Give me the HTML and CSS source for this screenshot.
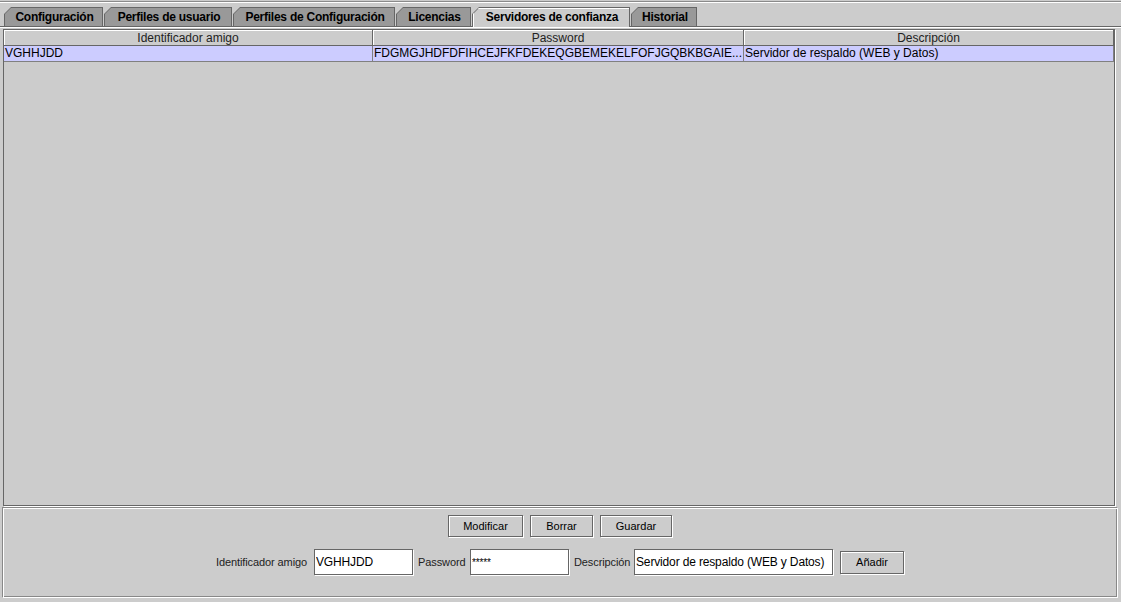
FILE: index.html
```html
<!DOCTYPE html>
<html lang="es">
<head>
    <meta charset="UTF-8">
    <title>Servidores de confianza</title>
    <link rel="stylesheet" href="styles.css">
</head>
<body>
    <div class="window">
        <div class="rule"></div>

        <div class="tabs">
            <div class="tab t-conf"><span class="tab-face">Configuración</span></div>
            <div class="tab t-users"><span class="tab-face">Perfiles de usuario</span></div>
            <div class="tab t-profiles"><span class="tab-face">Perfiles de Configuración</span></div>
            <div class="tab t-lic"><span class="tab-face">Licencias</span></div>
            <div class="tab t-trust active"><span class="tab-face">Servidores de confianza</span></div>
            <div class="tab t-hist"><span class="tab-face">Historial</span></div>
        </div>

        <div class="pane">
            <div class="table-box">
                <div class="thead">
                    <div class="th c1">Identificador amigo</div>
                    <div class="th c2">Password</div>
                    <div class="th c3">Descripción</div>
                </div>
                <div class="tr selected">
                    <div class="td c1">VGHHJDD</div>
                    <div class="td c2">FDGMGJHDFDFIHCEJFKFDEKEQGBEMEKELFOFJGQBKBGAIE...</div>
                    <div class="td c3">Servidor de respaldo (WEB y Datos)</div>
                </div>
            </div>

            <div class="editor">
                <div class="actions">
                    <button class="btn btn-mod">Modificar</button>
                    <button class="btn btn-del">Borrar</button>
                    <button class="btn btn-save">Guardar</button>
                </div>
                <div class="form">
                    <label class="lbl l-id">Identificador amigo</label>
                    <input class="field f-short" type="text" value="VGHHJDD">
                    <label class="lbl l-pass">Password</label>
                    <input class="field f-short f-pass" type="text" value="*****">
                    <label class="lbl l-desc">Descripción</label>
                    <input class="field f-long" type="text" value="Servidor de respaldo (WEB y Datos)">
                    <button class="btn btn-add">Añadir</button>
                </div>
            </div>
        </div>
    </div>
</body>
</html>
```

FILE: styles.css
```css
html, body {
    margin: 0;
    padding: 0;
    background: #cccccc;
}
body {
    font-family: "Liberation Sans", Arial, sans-serif;
    font-size: 12px;
    color: #000;
    width: 1121px;
    height: 602px;
    overflow: hidden;
}
.window {
    padding-top: 1px;
}
.rule {
    height: 0;
    border-top: 1px solid #8a8a8a;
    border-bottom: 1px solid #ffffff;
}

/* tab strip */
.tabs {
    display: flex;
    gap: 1px;
    margin-top: 4px;
    padding-left: 4px;
    height: 19px;
    position: relative;
    z-index: 1;
}
.tab {
    box-sizing: border-box;
    background: #666666;
    padding: 1px 1px 0 1px;
    clip-path: polygon(0 7px, 7px 0, 100% 0, 100% 100%, 0 100%);
}
.t-conf { width: 99px; }
.t-users { width: 128px; }
.t-profiles { width: 162px; }
.t-lic { width: 75px; }
.t-trust { width: 158px; }
.t-hist { width: 66px; }
.tab-face {
    display: flex;
    align-items: center;
    justify-content: center;
    height: 100%;
    padding-left: 2px;
    background: #999999;
    clip-path: polygon(0 6px, 6px 0, 100% 0, 100% 100%, 0 100%);
    font-weight: bold;
    font-size: 12px;
    letter-spacing: -0.25px;
    color: #000;
    white-space: nowrap;
    box-sizing: border-box;
}
.tab.active {
    height: 20px;
}
.tab.active .tab-face {
    background: #cccccc;
    box-shadow: inset 1px 1px 0 #ffffff;
    padding-bottom: 1px;
}

/* content below tabs */
.pane {
    border-top: 1px solid #666666;
    box-shadow: inset 0 1px 0 #ffffff;
    padding-top: 2px;
}
.table-box {
    margin-left: 3px;
    width: 1112px;
    height: 477px;
    box-sizing: border-box;
    border: 1px solid #666666;
    box-shadow: 1px 1px 0 #ffffff;
    background: #cccccc;
}
.thead, .tr {
    display: flex;
}
.c1 { width: 369px; }
.c2 { width: 371px; }
.c3 { width: 370px; }
.th {
    box-sizing: border-box;
    height: 16px;
    line-height: 16px;
    text-align: center;
    color: #222;
    border-right: 1px solid #666666;
    border-bottom: 1px solid #666666;
    box-shadow: inset 1px 1px 0 #ffffff;
}
.tr.selected {
    background: #ccccff;
}
.td {
    box-sizing: border-box;
    height: 16px;
    line-height: 15px;
    padding-left: 1px;
    border-right: 1px solid #808080;
    border-bottom: 1px solid #808080;
    white-space: nowrap;
    overflow: hidden;
}

/* editor panel */
.editor {
    margin: 1px 0 0 2px;
    width: 1116px;
    height: 91px;
    box-sizing: border-box;
    border: 1px solid;
    border-color: #888888 #ffffff #ffffff #888888;
    box-shadow: inset 1px 1px 0 #ffffff, inset -1px -1px 0 #888888;
    display: flex;
    flex-direction: column;
    align-items: center;
    padding-top: 7px;
    gap: 12px;
}
.actions {
    display: flex;
    gap: 7px;
}
.form {
    display: flex;
    align-items: center;
    gap: 5px;
    height: 26px;
}
.btn {
    font-family: "Liberation Sans", Arial, sans-serif;
    font-size: 11px;
    color: #000;
    background: #cccccc;
    height: 22px;
    padding: 0;
    margin: 0;
    border: 1px solid #666666;
    border-radius: 0;
    box-shadow: inset 1px 1px 0 #ffffff, 1px 1px 0 #ffffff;
}
.btn-mod { width: 75px; }
.btn-del { width: 63px; }
.btn-save { width: 72px; }
.btn-add { width: 64px; height: 23px; margin-left: 2px; }
.lbl {
    font-size: 11px;
    letter-spacing: -0.1px;
    color: #222;
    white-space: nowrap;
}
.l-id { width: 93px; }
.l-pass { width: 47px; }
.l-desc { width: 55px; }
.field {
    box-sizing: border-box;
    height: 26px;
    margin: 0;
    padding: 0 1px;
    border: 1px solid #666666;
    box-shadow: 1px 1px 0 #ffffff;
    background: #ffffff;
    font-family: "Liberation Sans", Arial, sans-serif;
    font-size: 12px;
    letter-spacing: -0.15px;
    color: #000;
    outline: none;
}
.f-short { width: 99px; }
.f-long { width: 199px; }
.f-pass { font-size: 10px; }
```
